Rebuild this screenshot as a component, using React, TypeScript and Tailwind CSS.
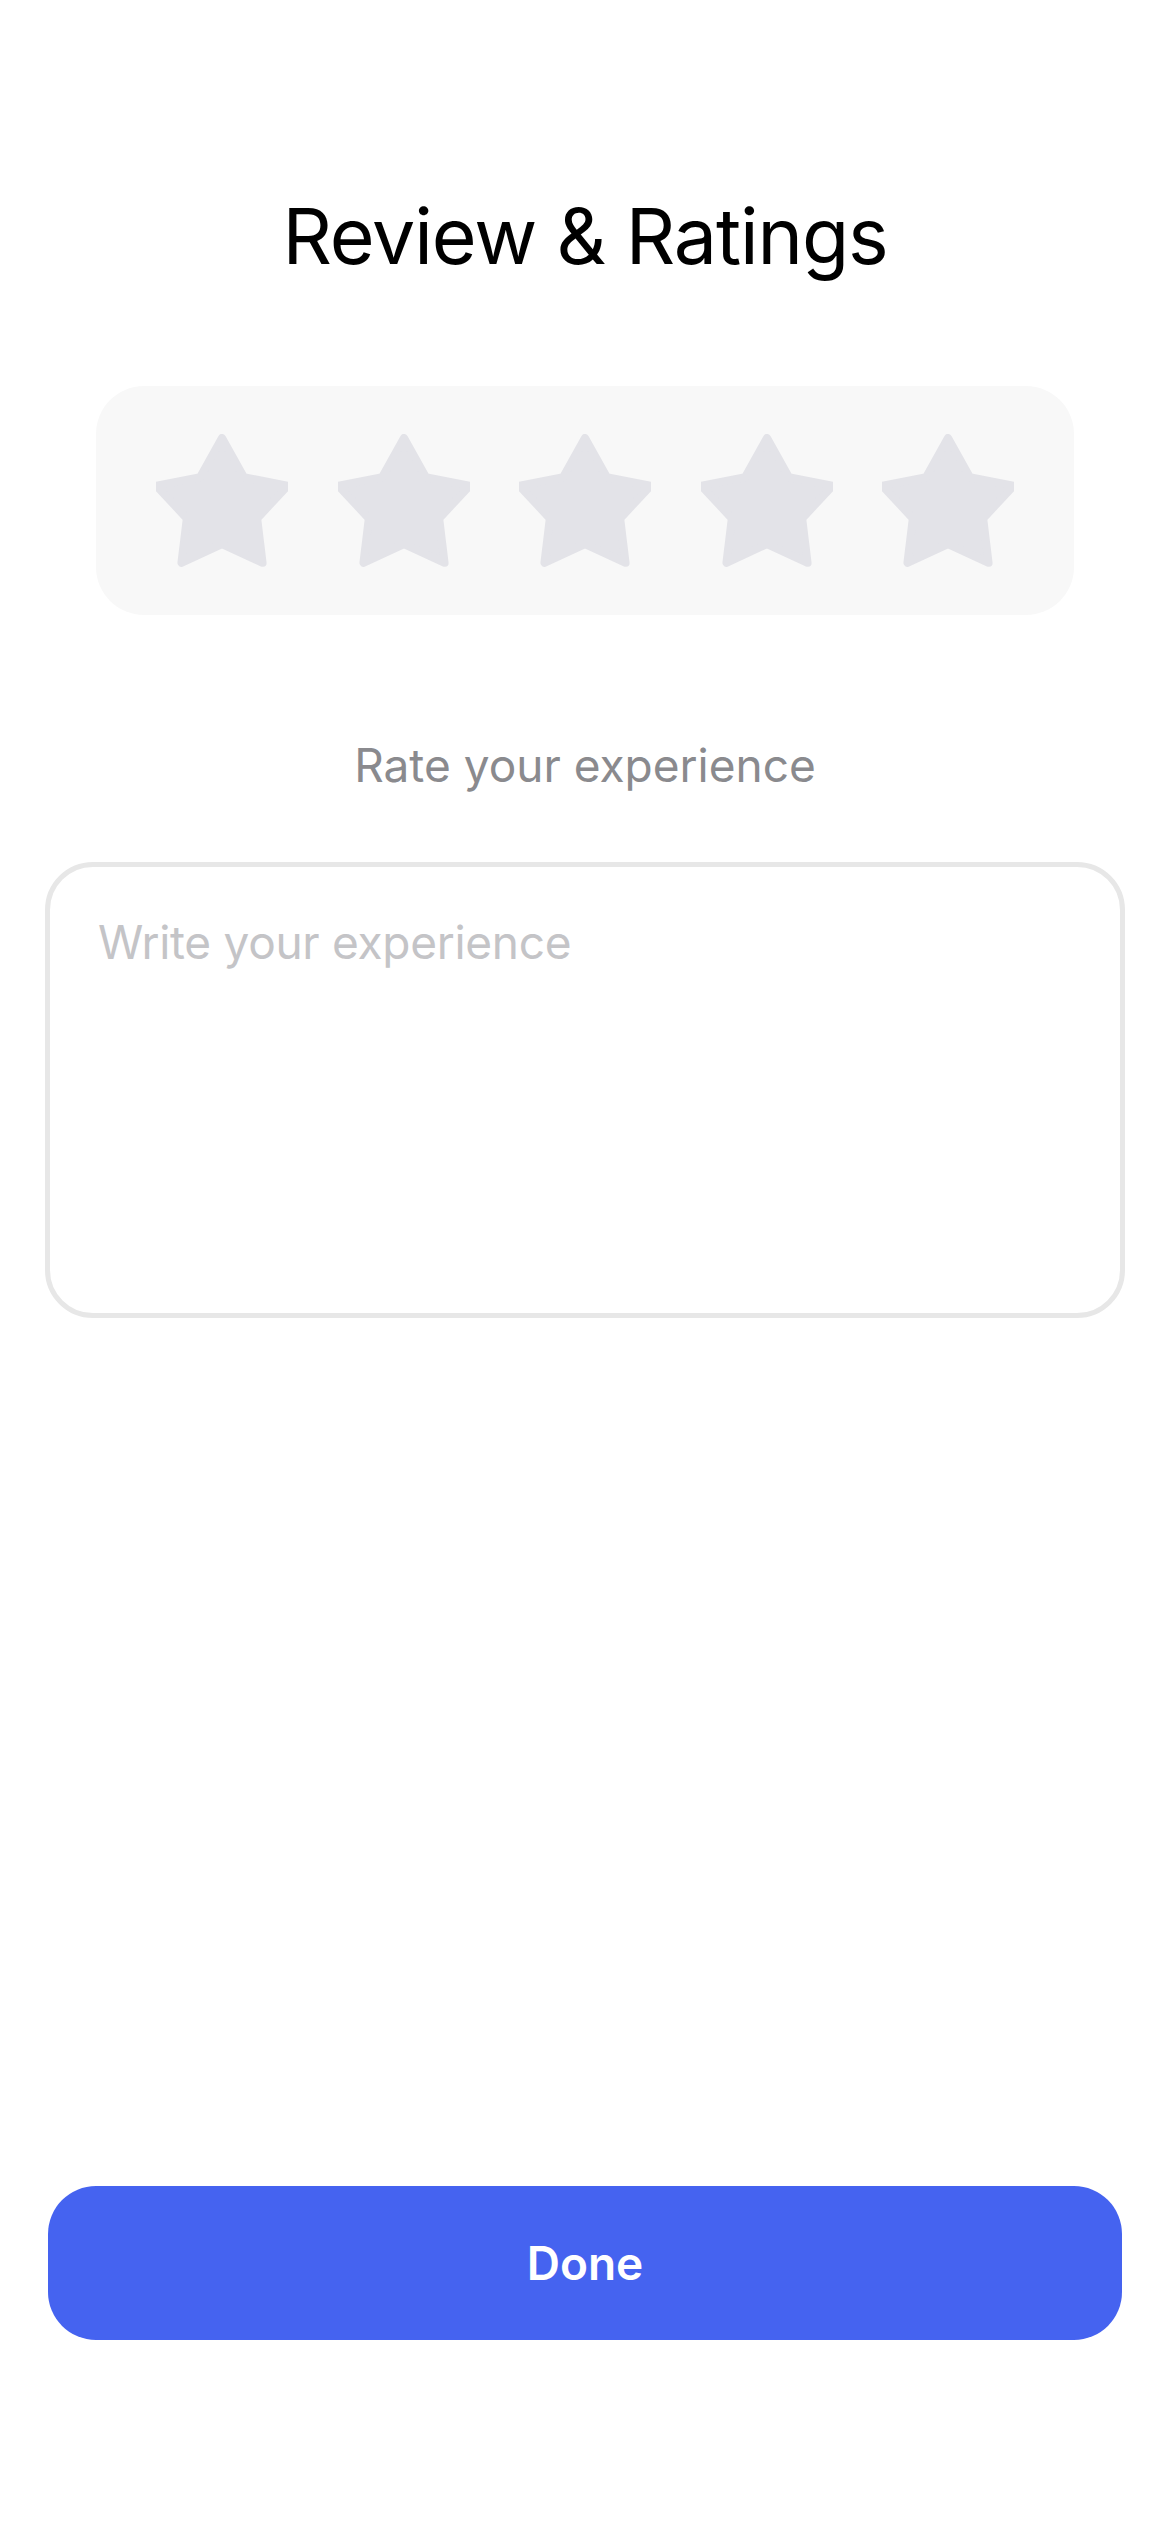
import React from "react";

function Star() {
  return (
    <svg width="132" height="133" viewBox="-66 -73 132 133" className="shrink-0">
      <polygon
        points="0,-69 21.75,-29.93 65.62,-21.32 35.19,11.43 40.56,55.82 0,37 -40.56,55.82 -35.19,11.43 -65.62,-21.32 -21.75,-29.93"
        fill="#E3E3E8"
        stroke="#E3E3E8"
        strokeWidth="8"
        strokeLinejoin="round"
      />
    </svg>
  );
}

export default function App() {
  return (
    <div className="w-[1170px] min-h-[2532px] bg-white flex flex-col font-['Inter','Liberation_Sans',sans-serif]">
      <h1 className="pt-[190px] text-center text-[77px] leading-[93px] font-normal text-black tracking-[-1.1px]">
        Review &amp; Ratings
      </h1>

      {/* star rating card */}
      <div className="mt-[103px] mx-auto w-[978px] h-[229px] rounded-[48px] bg-[#F8F8F8] px-[60px] flex items-center justify-between">
        <Star />
        <Star />
        <Star />
        <Star />
        <Star />
      </div>

      <p className="mt-[122px] text-center text-[46px] leading-[56px] text-[#8A8A8E]">
        Rate your experience
      </p>

      <textarea
        placeholder="Write your experience"
        className="mt-[69px] mx-[45px] h-[456px] rounded-[48px] border-[5px] border-[#E7E7E7] bg-white pl-[48px] pr-[48px] pt-[47px] text-[46px] leading-[56px] tracking-[-0.3px] text-black placeholder:text-[#C4C4C7] outline-none resize-none"
      />

      <button className="mt-[868px] mx-[48px] h-[154px] rounded-[48px] bg-[#4563F0] text-white text-[46px] font-semibold">
        Done
      </button>
    </div>
  );
}
